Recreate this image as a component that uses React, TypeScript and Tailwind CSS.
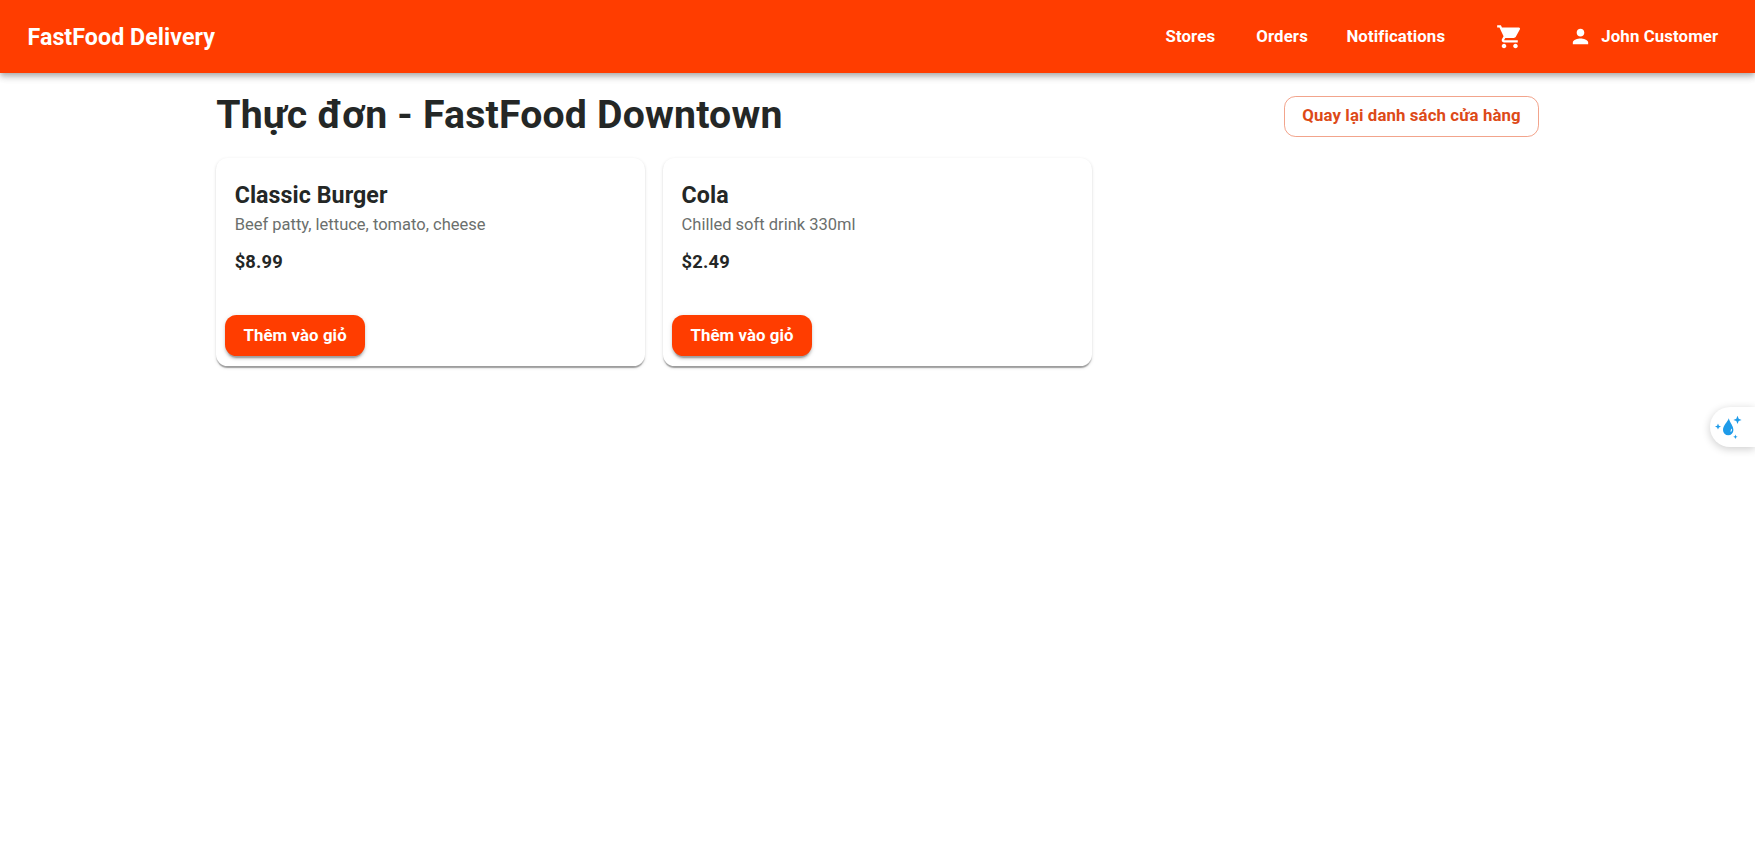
import { MdPerson, MdShoppingCart } from "react-icons/md";

const items = [
  { name: "Classic Burger", description: "Beef patty, lettuce, tomato, cheese", price: "$8.99" },
  { name: "Cola", description: "Chilled soft drink 330ml", price: "$2.49" },
];

const navButton =
  "flex h-[42px] min-w-[73.4px] items-center justify-center px-[9.2px] text-[16.8px] leading-[28px] font-bold tracking-[0.007em]";

function Header() {
  return (
    <header className="flex h-[73.4px] shrink-0 items-center justify-between bg-[#ff3d00] px-[27.5px] text-white shadow-[0_2.3px_4.6px_-1.1px_rgba(0,0,0,0.2),0_4.6px_5.7px_0_rgba(0,0,0,0.14),0_1.1px_11.5px_0_rgba(0,0,0,0.12)]">
      <div className="text-[23.2px] leading-[36px] font-bold tracking-[0.003em]">FastFood Delivery</div>
      <nav className="flex items-center gap-[18.4px]">
        <button className={navButton}>
          <span className="pb-[1px]">Stores</span>
        </button>
        <button className={navButton}>
          <span className="pb-[1px]">Orders</span>
        </button>
        <button className={navButton}>
          <span className="pb-[1px]">Notifications</span>
        </button>
        <button className={navButton} aria-label="Cart">
          <MdShoppingCart className="size-[27.5px]" />
        </button>
        <button className={navButton}>
          <MdPerson className="mr-[9.2px] -ml-[4.6px] size-[23px]" />
          <span className="pb-[1px]">John Customer</span>
        </button>
      </nav>
    </header>
  );
}

function MenuCard({ name, description, price }: (typeof items)[number]) {
  return (
    <article className="flex flex-col rounded-[11.5px] bg-white shadow-[0_2.3px_1.1px_-1.1px_rgba(0,0,0,0.2),0_1.1px_1.1px_0_rgba(0,0,0,0.14),0_1.1px_3.4px_0_rgba(0,0,0,0.12)]">
      <div className="px-[18.4px] pt-[19px] pb-[26.4px]">
        <h2 className="text-[23.2px] leading-[36px] font-bold tracking-[0.003em]">{name}</h2>
        <p className="text-[16.5px] leading-[23px] text-[#6b6f6d]">{description}</p>
        <p className="mt-[9px] text-[18.35px] leading-[34px] font-bold tracking-[0.00938em]">{price}</p>
      </div>
      <div className="flex px-[9.2px] pt-[9.7px] pb-[9.2px]">
        <button className="h-[41.5px] rounded-[11.5px] bg-[#ff3d00] px-[18px] pb-[2px] text-[16.8px] leading-[28px] font-bold tracking-[0.006em] text-white shadow-[0_3.4px_1.1px_-2.3px_rgba(0,0,0,0.2),0_2.3px_2.3px_0_rgba(0,0,0,0.14),0_1.1px_5.7px_0_rgba(0,0,0,0.12)]">
          Thêm vào giỏ
        </button>
      </div>
    </article>
  );
}

export default function App() {
  return (
    <div className="flex h-screen flex-col overflow-hidden bg-white font-[Roboto,sans-serif] text-[#242726]">
      <Header />
      <main className="mx-auto w-[1322.5px] pt-[18.4px]">
        <div className="mb-[18px] flex items-center justify-between">
          <h1 className="pb-[1px] text-[39.2px] leading-[47px] font-bold tracking-[0.005em]">Thực đơn - FastFood Downtown</h1>
          <button className="mt-[1px] h-[41px] rounded-[11.5px] border border-[#e64a19]/50 px-[17px] pb-[2px] text-[16.8px] leading-[28px] font-bold tracking-[0.007em] text-[#dd4a18]">
            Quay lại danh sách cửa hàng
          </button>
        </div>
        <div className="grid grid-cols-3 gap-[18.4px]">
          {items.map((item) => (
            <MenuCard key={item.name} {...item} />
          ))}
        </div>
      </main>
      <button
        aria-label="Assistant"
        className="absolute top-[407px] right-0 flex h-[40px] w-[45px] items-center rounded-l-full bg-white pl-[5px] shadow-[0_2px_9px_rgba(0,0,0,0.2)]"
      >
        <svg viewBox="0 0 28 24" className="h-6 w-7" fill="#1e9be9">
          <path d="M13.800 3.300C12.500 7 8 10.500 8 15A5.200 5.300 0 0 0 18.400 15C18.400 11 15 8 13.800 3.300Z" />
          <path d="M16.600 13.500c.8 1.400.3 2.900-1 3.500 0-1.400.1-2.400 1-3.500Z" fill="#fff" />
          <path d="M22.500.8 23.700 3.700 26.600 4.900 23.700 6.100 22.500 9 21.300 6.100 18.400 4.900 21.300 3.700Z" />
          <path d="M3 8.600 3.900 10.700 6 11.600 3.900 12.500 3 14.600 2.100 12.500 0 11.600 2.100 10.700Z" />
          <path d="M20.400 19.600 21 21.200 22.600 21.800 21 22.400 20.400 24 19.800 22.400 18.200 21.800 19.800 21.200Z" />
        </svg>
      </button>
    </div>
  );
}
